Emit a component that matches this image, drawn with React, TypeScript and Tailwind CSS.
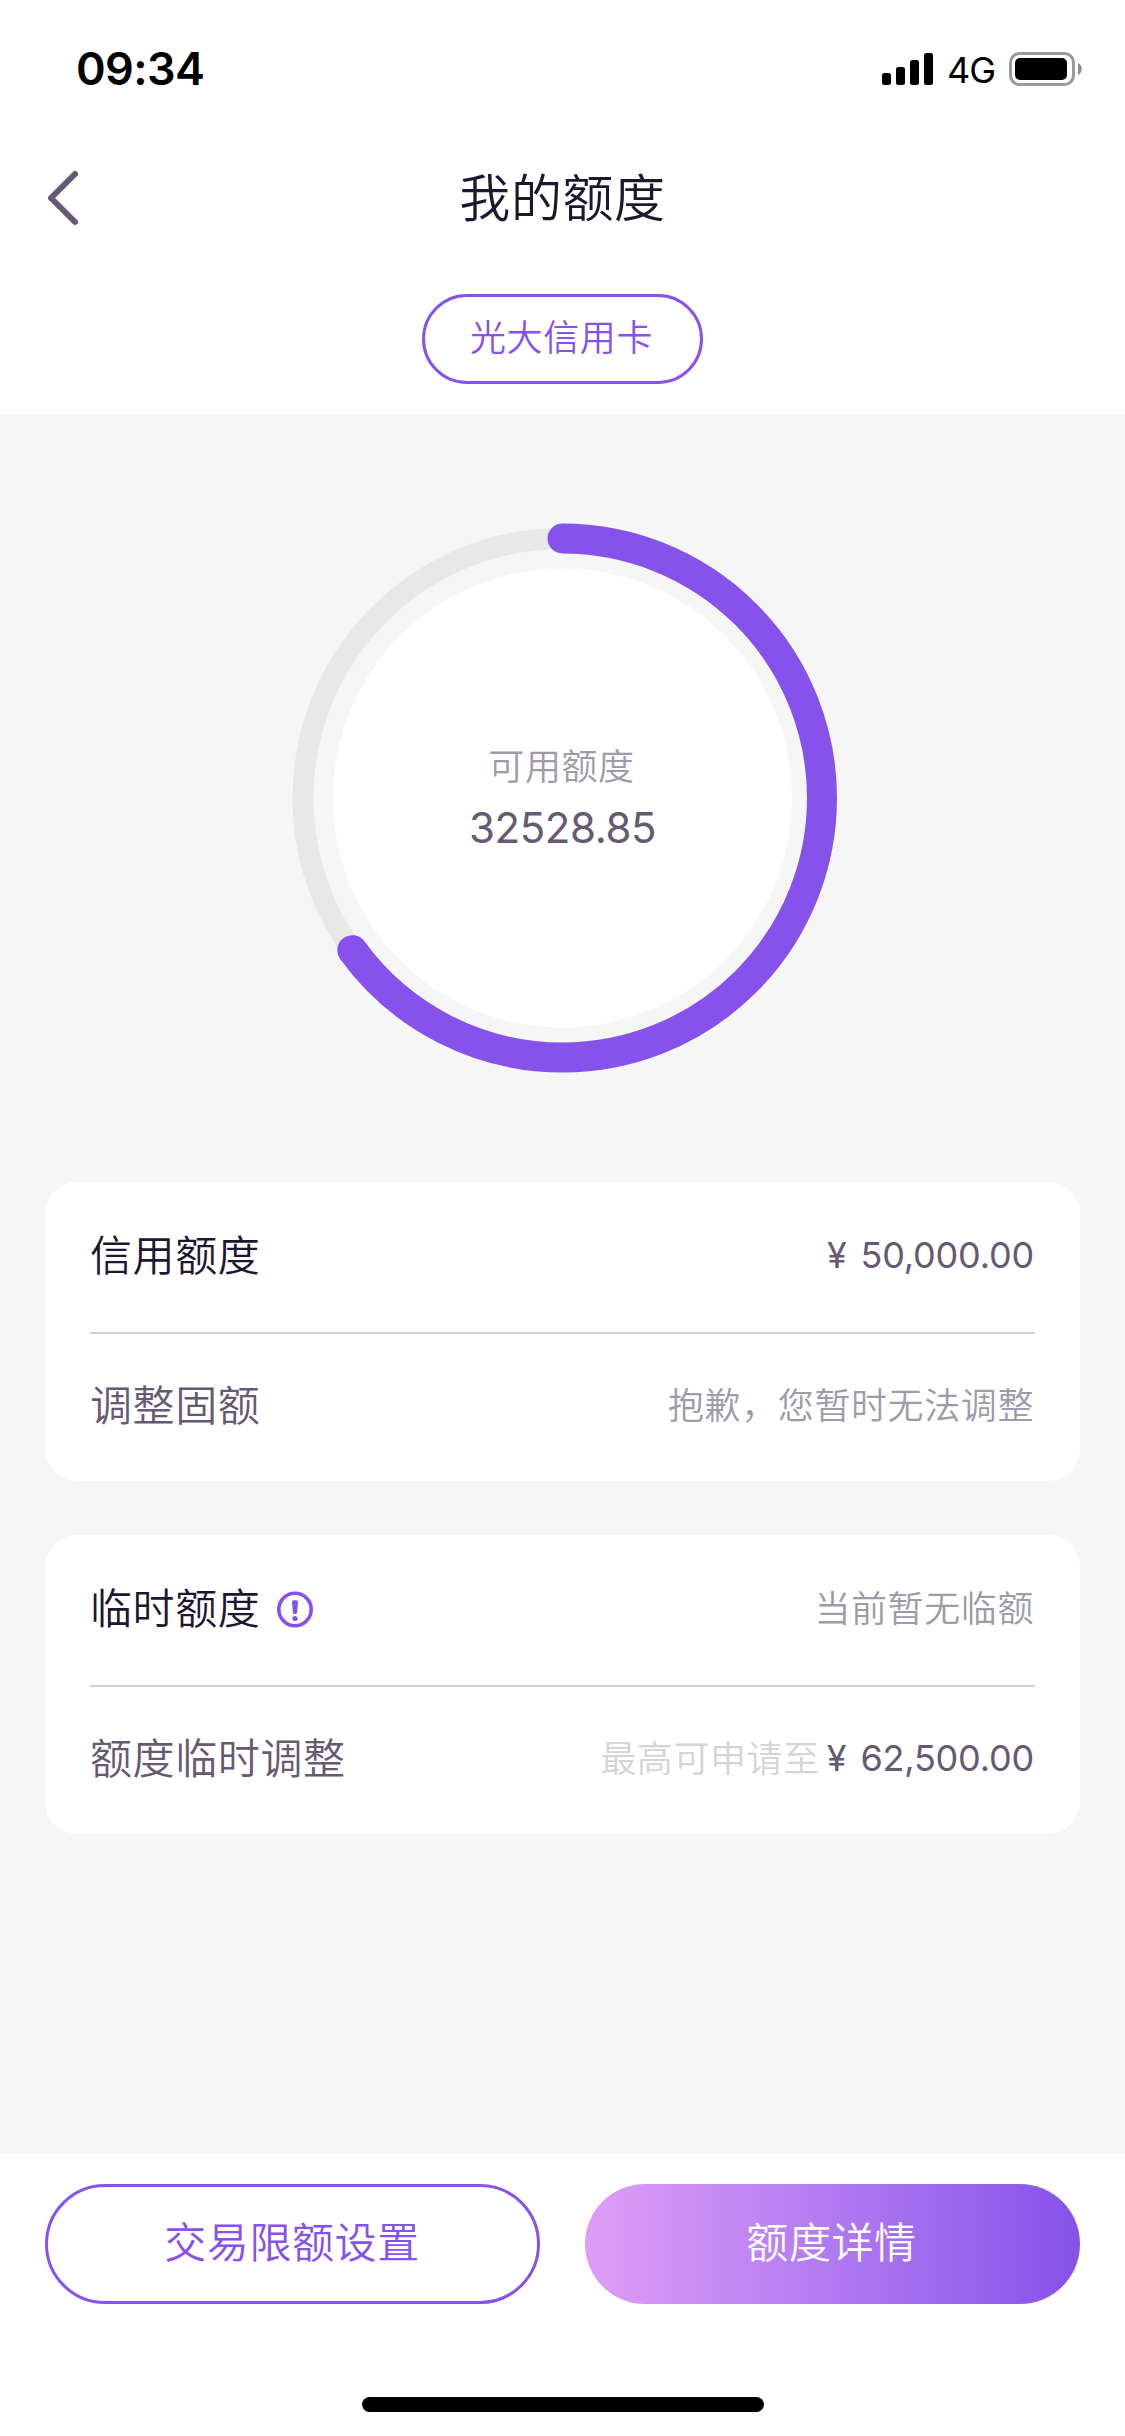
import { ReactNode } from "react";

const TOTAL_LIMIT = 50000;
const AVAILABLE_LIMIT = 32528.85;

interface RowProps {
  label: string;
  muted?: boolean;
  icon?: ReactNode;
  children: ReactNode;
}

function StatusBar() {
  return (
    <div className="flex h-[138px] items-start justify-between pl-[76px] pr-[42px] font-normal text-black">
      <span className="mt-[42px] text-[45px] leading-[54px] font-semibold tracking-[-0.6px]">
        09:34
      </span>
      <div className="mt-[52px] flex h-[34px] items-center">
        <svg width="52" height="34" viewBox="0 0 52 34" aria-hidden="true">
          <rect x="0" y="21" width="9" height="12" rx="2.5" />
          <rect x="14" y="15" width="9" height="18" rx="2.5" />
          <rect x="28" y="8" width="9" height="25" rx="2.5" />
          <rect x="42" y="1" width="9" height="32" rx="2.5" />
        </svg>
        <span className="ml-[13px] mt-[2px] w-[62px] text-[36px] leading-[34px] tracking-[-1px]">
          4G
        </span>
        <svg width="74" height="34" viewBox="0 0 74 34" aria-hidden="true">
          <rect
            x="1.5"
            y="1.5"
            width="63"
            height="31"
            rx="9"
            fill="none"
            stroke="#9a9a9a"
            strokeWidth="3"
          />
          <rect x="6" y="6" width="52" height="22" rx="5" />
          <path d="M69 11c5 2 5 10 0 12z" fill="#8e8e8e" />
        </svg>
      </div>
    </div>
  );
}

function LimitRing() {
  const radius = 259.5;
  const length = 2 * Math.PI * radius;
  // whole percent only, the remainder is dropped
  const percent = Math.floor((AVAILABLE_LIMIT / TOTAL_LIMIT) * 100);
  const used = (percent / 100) * length;

  return (
    <div className="relative h-[550px] w-[550px]">
      <svg width="550" height="550" viewBox="0 0 550 550" aria-hidden="true">
        <circle
          cx="274.5"
          cy="275"
          r={radius}
          fill="none"
          stroke="#e8e8e8"
          strokeWidth="21"
        />
        <circle cx="274.5" cy="275" r="229.5" fill="#fff" />
        <circle
          cx="274.5"
          cy="275"
          r={radius}
          fill="none"
          stroke="#8652eb"
          strokeWidth="30"
          strokeLinecap="round"
          strokeDasharray={`${used} ${length}`}
          transform="rotate(-90 274.5 275)"
        />
      </svg>
      <div className="absolute inset-0 flex flex-col items-center pt-[217px]">
        <p className="mr-[2px] text-[36px] leading-[54px] text-[#9d9ba9]">
          可用额度
        </p>
        <p className="mt-[8px] text-[42px] leading-[52px] font-normal tracking-[-0.4px] text-[#665a73]">
          {AVAILABLE_LIMIT}
        </p>
      </div>
    </div>
  );
}

function Row({ label, muted = false, icon, children }: RowProps) {
  return (
    <div className="flex h-[143px] items-center justify-between border-[#cfcfd1] first:h-[152px] first:border-b-2 first:pb-[3px]">
      <div className="flex items-center">
        <span
          className={
            muted
              ? "text-[42px] leading-[60px] text-[#665a73]"
              : "text-[42px] leading-[60px] text-[#1e1730]"
          }
        >
          {label}
        </span>
        {icon}
      </div>
      <div className="flex items-center pr-px text-[36px] leading-[54px] text-[#9d9ba9]">
        {children}
      </div>
    </div>
  );
}

function Amount({ value }: { value: string }) {
  return (
    <span className="pb-px font-normal tracking-[-0.2px] text-[#665a73]">
      <span className="mr-[4px]">¥</span> {value}
    </span>
  );
}

function Card({ children }: { children: ReactNode }) {
  return (
    <section className="mx-[45px] h-[299px] rounded-[32px] bg-white px-[45px]">
      {children}
    </section>
  );
}

function InfoIcon() {
  return (
    <svg
      className="ml-[16px]"
      width="38"
      height="38"
      viewBox="0 0 38 38"
      aria-hidden="true"
    >
      <circle
        cx="19"
        cy="19.5"
        r="16.2"
        fill="none"
        stroke="#8652eb"
        strokeWidth="3.6"
      />
      <path
        d="M16 12c0-1 .7-1.700 1.700-1.700h2.600c1 0 1.700.7 1.700 1.700l-.9 10.300c-.1 1-.8 1.600-1.600 1.600h-1c-.8 0-1.500-.6-1.600-1.600z"
        fill="#8652eb"
      />
      <circle cx="19" cy="28.5" r="2.6" fill="#8652eb" />
    </svg>
  );
}

export default function App() {
  return (
    <main className="flex h-[2436px] w-[1125px] flex-col overflow-hidden bg-[#f6f6f6] font-['Inter','Noto_Sans_CJK_SC',sans-serif] font-[350] tracking-[0.6px]">
      <header className="h-[414px] shrink-0 bg-white">
        <StatusBar />
        <div className="grid h-[120px] grid-cols-[1fr_auto_1fr] items-center px-[45px]">
          <button aria-label="返回">
            <svg
              width="36"
              height="60"
              viewBox="0 0 36 60"
              fill="none"
              stroke="#665a73"
              strokeWidth="6"
              strokeLinecap="round"
              strokeLinejoin="round"
            >
              <path d="M30 6L6 30l24 24" />
            </svg>
          </button>
          <h1 className="pt-[2px] text-[51px] leading-[72px] text-[#1e1730]">
            我的额度
          </h1>
        </div>
        <div className="mt-[36px] flex justify-center">
          <button className="h-[90px] w-[281px] rounded-full border-3 border-[#8652eb] pb-[2px] pr-[2px] text-[36px] leading-[54px] text-[#8652eb]">
            光大信用卡
          </button>
        </div>
      </header>

      <div className="flex flex-1 flex-col">
        <div className="flex h-[768px] justify-center pt-[109px]">
          <LimitRing />
        </div>
        <Card>
          <Row label="信用额度">
            <Amount value="50,000.00" />
          </Row>
          <Row label="调整固额" muted>
            抱歉，您暂时无法调整
          </Row>
        </Card>
        <div className="h-[54px]" />
        <Card>
          <Row label="临时额度" icon={<InfoIcon />}>
            当前暂无临额
          </Row>
          <Row label="额度临时调整" muted>
            <span className="mr-[7px] text-[#d4d3d8]">最高可申请至</span>
            <Amount value="62,500.00" />
          </Row>
        </Card>
      </div>

      <footer className="flex h-[282px] shrink-0 flex-col items-center bg-white px-[45px] pt-[30px]">
        <div className="grid h-[120px] w-full grid-cols-2 gap-[45px] text-[42px] leading-[60px]">
          <button className="rounded-full border-3 border-[#8652eb] pb-[2px] pr-px text-[#8652eb]">
            交易限额设置
          </button>
          <button className="rounded-full bg-linear-to-r from-[#df9df5] to-[#8651e9] pb-[2px] pr-[2px] text-white">
            额度详情
          </button>
        </div>
        <div className="mt-[93px] h-[15px] w-[402px] rounded-full bg-black" />
      </footer>
    </main>
  );
}
